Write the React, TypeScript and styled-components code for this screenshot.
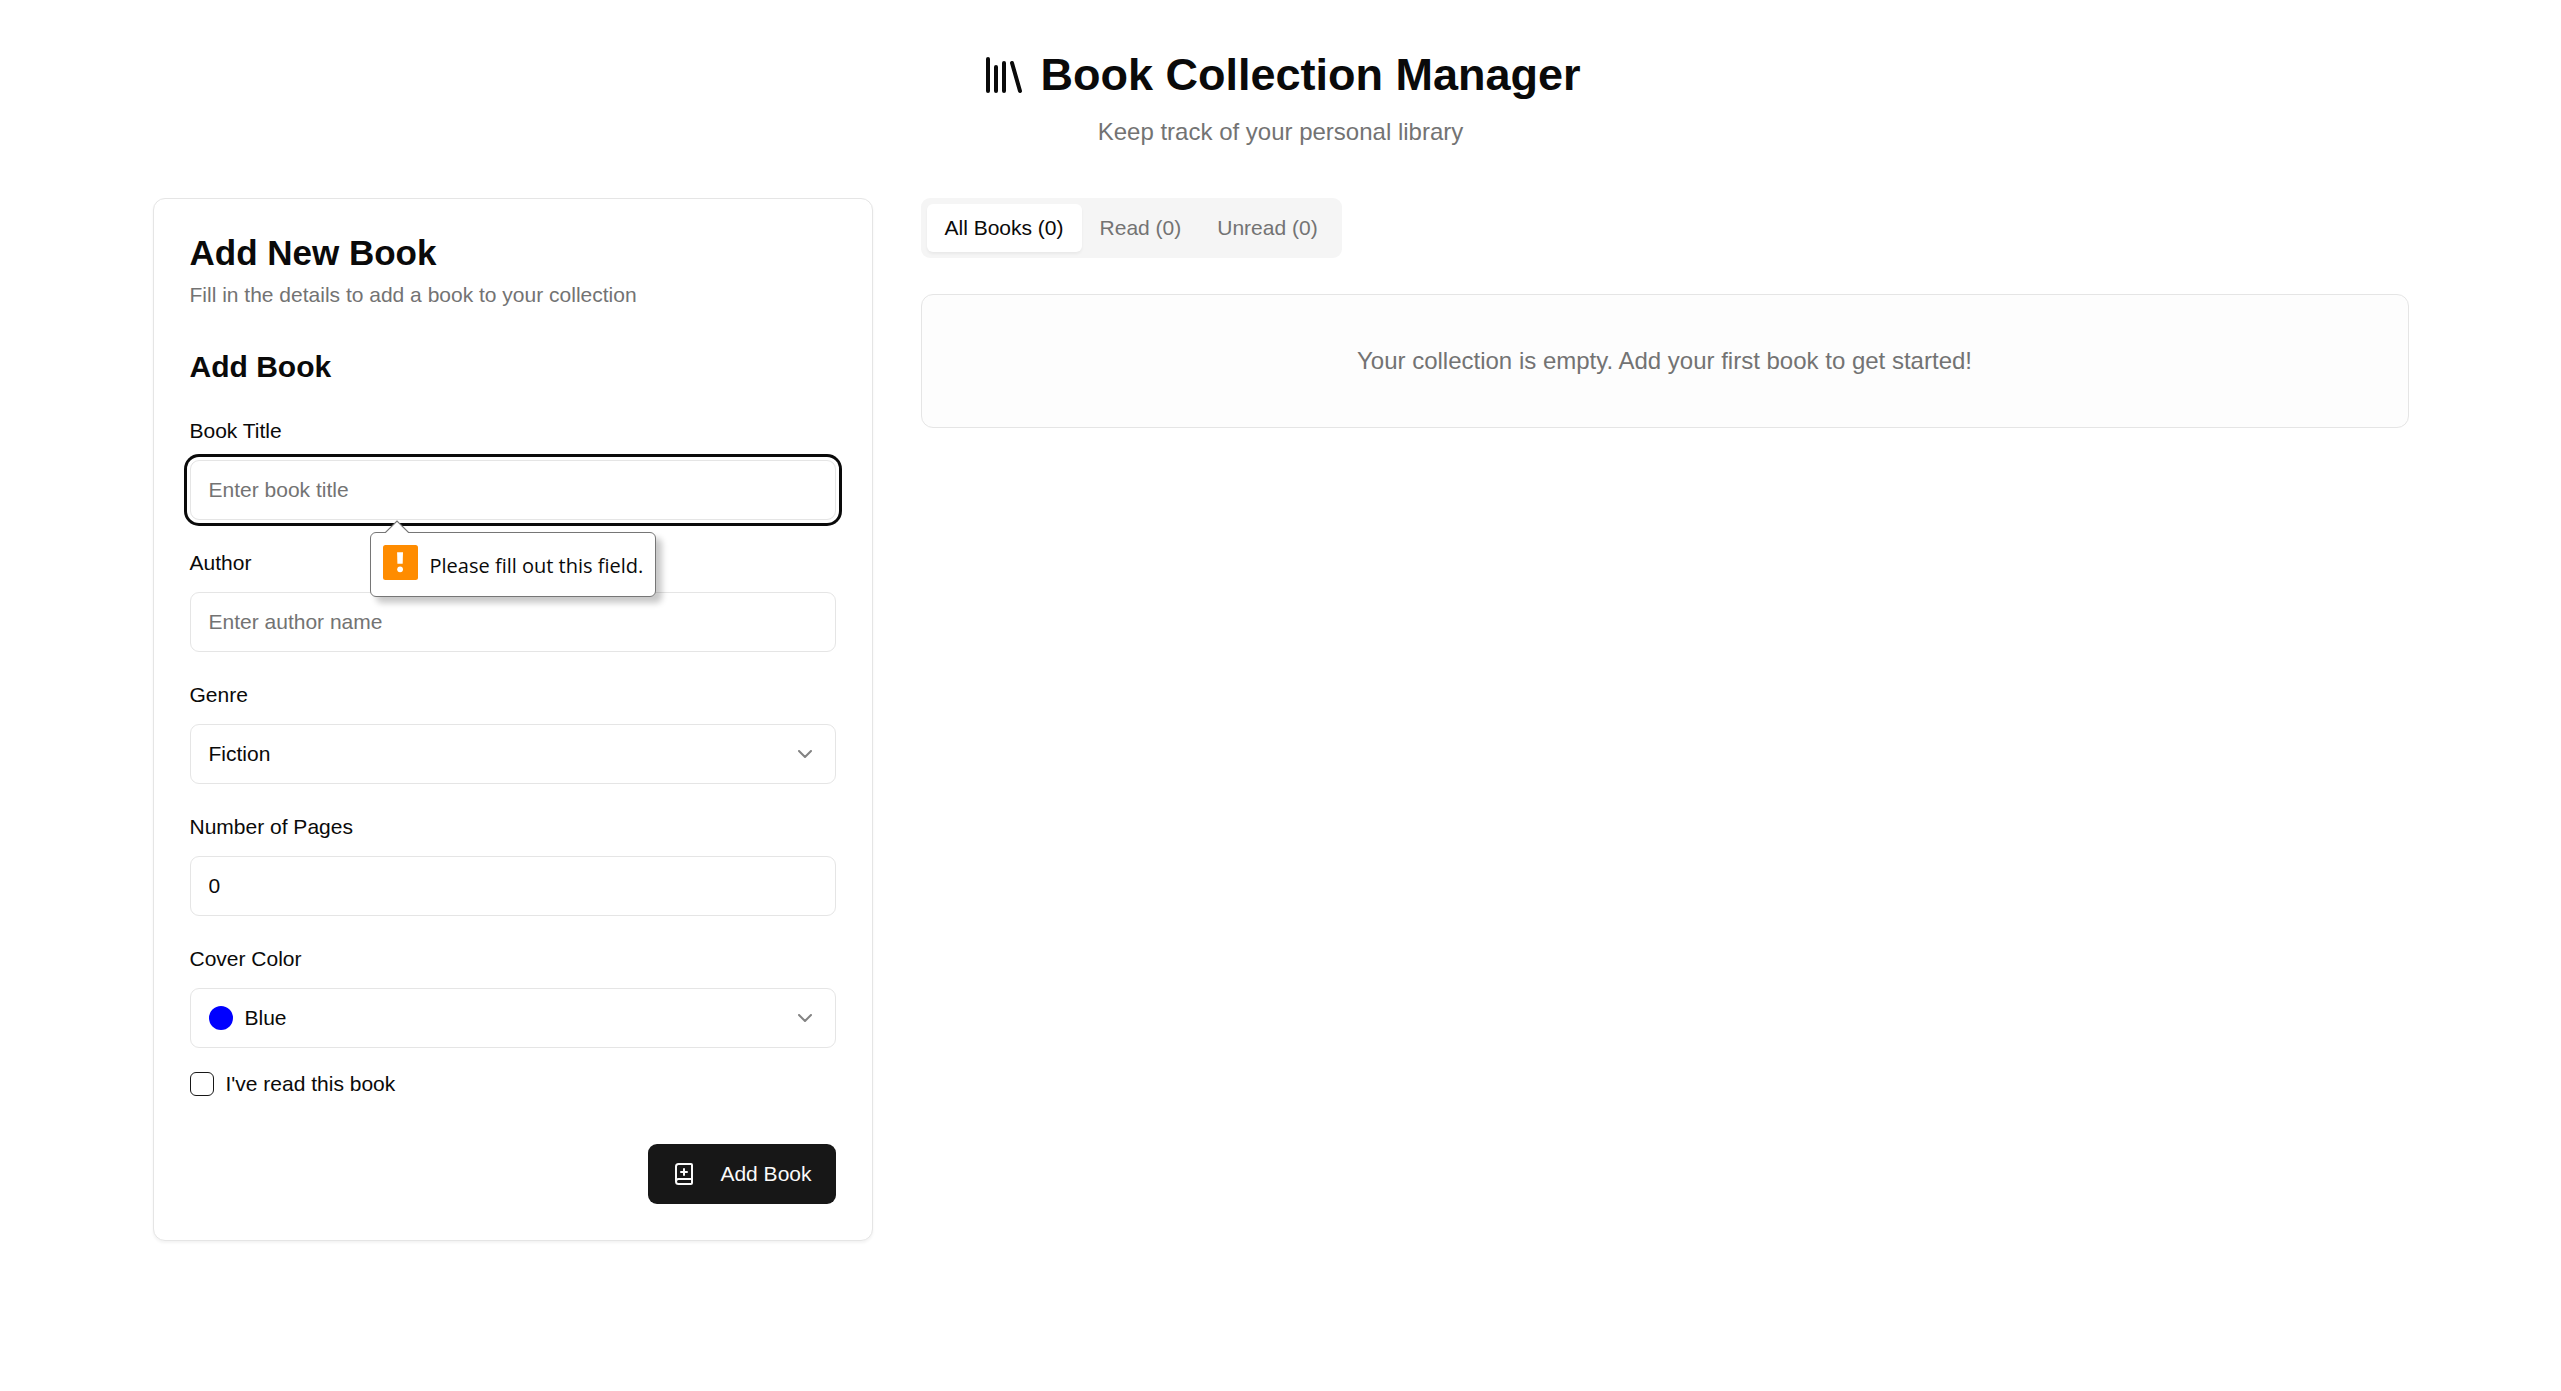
import React, { useState } from "react";
import styled, { createGlobalStyle, css } from "styled-components";
import { BookPlus, ChevronDown, Library } from "lucide-react";

const color = {
  ink: "#0a0a0a",
  muted: "#737373",
  line: "#e5e5e5",
  soft: "#f5f5f5",
  primary: "#171717",
  onPrimary: "#fafafa",
};

const GlobalStyle = createGlobalStyle`
  *, *::before, *::after { box-sizing: border-box; }
  body {
    margin: 0;
    background: #ffffff;
    color: ${color.ink};
    font-family: "Liberation Sans", Arial, sans-serif;
    font-size: 24px;
    line-height: 36px;
  }
  h1, h2, h3, p { margin: 0; }
  button, input, select { font-family: inherit; color: inherit; }
`;

const Page = styled.main`
  max-width: 2304px;
  margin: 0 auto;
  padding: 48px 24px;
`;

const Header = styled.header`
  display: flex;
  flex-direction: column;
  align-items: center;
  gap: 12px;
  margin-bottom: 48px;
`;

const PageTitle = styled.h1`
  display: flex;
  align-items: center;
  gap: 12px;
  font-size: 45px;
  line-height: 54px;
  font-weight: 700;
`;

const Muted = styled.p<{ $small?: boolean }>`
  color: ${color.muted};
  ${(p) => p.$small && css`font-size: 21px; line-height: 30px;`}
`;

const Columns = styled.div`
  display: grid;
  grid-template-columns: repeat(3, minmax(0, 1fr));
  gap: 48px;
  align-items: start;

  @media (max-width: 1400px) {
    grid-template-columns: minmax(0, 1fr);
  }
`;

const Card = styled.section`
  border: 1px solid ${color.line};
  border-radius: 12px;
  padding: 36px;
  background: #ffffff;
  box-shadow: 0 2px 3px rgba(0, 0, 0, 0.05);
`;

const CardHeader = styled.div`
  display: grid;
  gap: 9px;
  margin-bottom: 36px;
`;

const CardTitle = styled.h2`
  font-size: 35px;
  line-height: 36px;
  font-weight: 700;
`;

const Form = styled.form`
  display: grid;
  gap: 24px;
`;

const FormTitle = styled.h3`
  font-size: 30px;
  line-height: 42px;
  font-weight: 700;
`;

const Field = styled.div`
  position: relative;
  display: grid;
  gap: 12px;
`;

const Label = styled.label`
  font-size: 21px;
  line-height: 24px;
`;

const controlStyle = css`
  width: 100%;
  height: 60px;
  border: 1px solid ${color.line};
  border-radius: 9px;
  padding: 0 18px;
  background: #ffffff;
  font-size: 21px;
  line-height: 30px;
  outline: none;
`;

const TextInput = styled.input<{ $ringed?: boolean }>`
  ${controlStyle}
  appearance: textfield;
  &::placeholder { color: ${color.muted}; opacity: 1; }
  &::-webkit-inner-spin-button { appearance: none; margin: 0; }
  ${(p) => p.$ringed && css`
    box-shadow: 0 0 0 3px #ffffff, 0 0 0 6px ${color.ink};
  `}
`;

const SelectBox = styled.div`
  display: grid;
  align-items: center;
  & > * { grid-area: 1 / 1; }
  & > svg {
    justify-self: end;
    margin-right: 19px;
    opacity: 0.5;
    pointer-events: none;
  }
`;

const Select = styled.select<{ $withSwatch?: boolean }>`
  ${controlStyle}
  appearance: none;
  ${(p) => p.$withSwatch && css`padding-left: 54px;`}
`;

const Swatch = styled.span<{ $fill: string }>`
  z-index: 1;
  width: 24px;
  height: 24px;
  margin-left: 19px;
  border-radius: 50%;
  background: ${(p) => p.$fill};
  pointer-events: none;
`;

const CheckRow = styled.div`
  display: flex;
  align-items: center;
  gap: 12px;
`;

const Checkbox = styled.input`
  appearance: none;
  width: 24px;
  height: 24px;
  margin: 0;
  border: 1px solid ${color.primary};
  border-radius: 6px;
  background: #ffffff;
  &:checked { background: ${color.primary}; }
`;

const Actions = styled.div`
  display: flex;
  justify-content: flex-end;
  padding-top: 24px;
`;

const SubmitButton = styled.button`
  display: inline-flex;
  align-items: center;
  gap: 24px;
  height: 60px;
  padding: 0 24px;
  border: 0;
  border-radius: 9px;
  background: ${color.primary};
  color: ${color.onPrimary};
  font-size: 21px;
  line-height: 30px;
`;

const Bubble = styled.div`
  position: absolute;
  z-index: 2;
  top: 120px;
  left: 180px;
  display: flex;
  align-items: center;
  gap: 12px;
  height: 65px;
  padding: 2px 12px 0;
  border: 1px solid #767676;
  border-radius: 6px;
  background: #ffffff;
  box-shadow: 6px 6px 6px rgba(0, 0, 0, 0.22);
  white-space: nowrap;
  font-family: "Open Sans", "Noto Sans", sans-serif;
  font-size: 20px;
  line-height: 30px;
`;

const BubbleArrow = styled.svg`
  position: absolute;
  top: -13px;
  left: 13px;
`;

const BubbleIcon = styled.svg`
  margin-bottom: 6px;
`;

const Shelf = styled.section`
  grid-column: span 2;
  display: grid;
  gap: 36px;
  justify-items: start;

  @media (max-width: 1400px) {
    grid-column: auto;
  }
`;

const TabList = styled.div`
  display: inline-flex;
  padding: 6px;
  border-radius: 9px;
  background: ${color.soft};
`;

const Tab = styled.button<{ $active: boolean }>`
  padding: 9px 18px;
  border: 0;
  border-radius: 6px;
  background: transparent;
  color: ${color.muted};
  font-size: 21px;
  line-height: 30px;
  ${(p) => p.$active && css`
    background: #ffffff;
    color: ${color.ink};
    box-shadow: 0 2px 3px rgba(0, 0, 0, 0.05);
  `}
`;

const EmptyState = styled.div`
  width: 100%;
  padding: 48px;
  border: 1px solid ${color.line};
  border-radius: 12px;
  background: #fdfdfd;
  color: ${color.muted};
  text-align: center;
`;

const tabs = ["All Books (0)", "Read (0)", "Unread (0)"];
const genres = ["Fiction", "Non-Fiction", "Mystery", "Fantasy"];
const covers: Record<string, string> = {
  Blue: "#0000ff",
  Red: "#ff0000",
  Green: "#008000",
};

function RequiredBubble() {
  return (
    <Bubble role="alert">
      <BubbleArrow width="26" height="14" viewBox="0 0 26 14" aria-hidden="true">
        <path d="M1.5 12.5 13 1l11.5 11.5V14h-23z" fill="#fff" />
        <path d="M1 12.5h.5L13 1l11.5 11.5h.5" fill="none" stroke="#767676" strokeWidth="1.2" />
      </BubbleArrow>
      <BubbleIcon width="35" height="35" viewBox="0 0 35 35" aria-hidden="true">
        <rect width="35" height="35" rx="2.5" fill="#ff8c00" />
        <path d="M14.1 7.2h5.9l-.3 11.6h-5.3z" fill="#fff" />
        <circle cx="17.1" cy="24.3" r="2.9" fill="#fff" />
      </BubbleIcon>
      Please fill out this field.
    </Bubble>
  );
}

export default function App() {
  const [tab, setTab] = useState(tabs[0]);
  const [cover, setCover] = useState("Blue");

  return (
    <>
      <GlobalStyle />
      <Page>
        <Header>
          <PageTitle>
            <Library size={48} aria-hidden="true" />
            Book Collection Manager
          </PageTitle>
          <Muted>Keep track of your personal library</Muted>
        </Header>

        <Columns>
          <Card>
            <CardHeader>
              <CardTitle>Add New Book</CardTitle>
              <Muted $small>Fill in the details to add a book to your collection</Muted>
            </CardHeader>
            <Form noValidate onSubmit={(e) => e.preventDefault()}>
              <FormTitle>Add Book</FormTitle>

              <Field>
                <div><Label htmlFor="title">Book Title</Label></div>
                <TextInput id="title" placeholder="Enter book title" required $ringed />
                <RequiredBubble />
              </Field>

              <Field>
                <div><Label htmlFor="author">Author</Label></div>
                <TextInput id="author" placeholder="Enter author name" required />
              </Field>

              <Field>
                <div><Label htmlFor="genre">Genre</Label></div>
                <SelectBox>
                  <Select id="genre" defaultValue="Fiction">
                    {genres.map((g) => <option key={g}>{g}</option>)}
                  </Select>
                  <ChevronDown size={24} aria-hidden="true" />
                </SelectBox>
              </Field>

              <Field>
                <div><Label htmlFor="pages">Number of Pages</Label></div>
                <TextInput id="pages" type="number" min={0} defaultValue={0} />
              </Field>

              <Field>
                <div><Label htmlFor="cover">Cover Color</Label></div>
                <SelectBox>
                  <Select
                    id="cover"
                    value={cover}
                    onChange={(e) => setCover(e.target.value)}
                    $withSwatch
                  >
                    {Object.keys(covers).map((c) => <option key={c}>{c}</option>)}
                  </Select>
                  <Swatch $fill={covers[cover]} />
                  <ChevronDown size={24} aria-hidden="true" />
                </SelectBox>
              </Field>

              <CheckRow>
                <Checkbox id="read" type="checkbox" />
                <Label htmlFor="read">I've read this book</Label>
              </CheckRow>

              <Actions>
                <SubmitButton type="submit">
                  <BookPlus size={24} aria-hidden="true" />
                  Add Book
                </SubmitButton>
              </Actions>
            </Form>
          </Card>

          <Shelf>
            <TabList role="tablist">
              {tabs.map((t) => (
                <Tab
                  key={t}
                  type="button"
                  role="tab"
                  aria-selected={t === tab}
                  $active={t === tab}
                  onClick={() => setTab(t)}
                >
                  {t}
                </Tab>
              ))}
            </TabList>
            <EmptyState>Your collection is empty. Add your first book to get started!</EmptyState>
          </Shelf>
        </Columns>
      </Page>
    </>
  );
}
